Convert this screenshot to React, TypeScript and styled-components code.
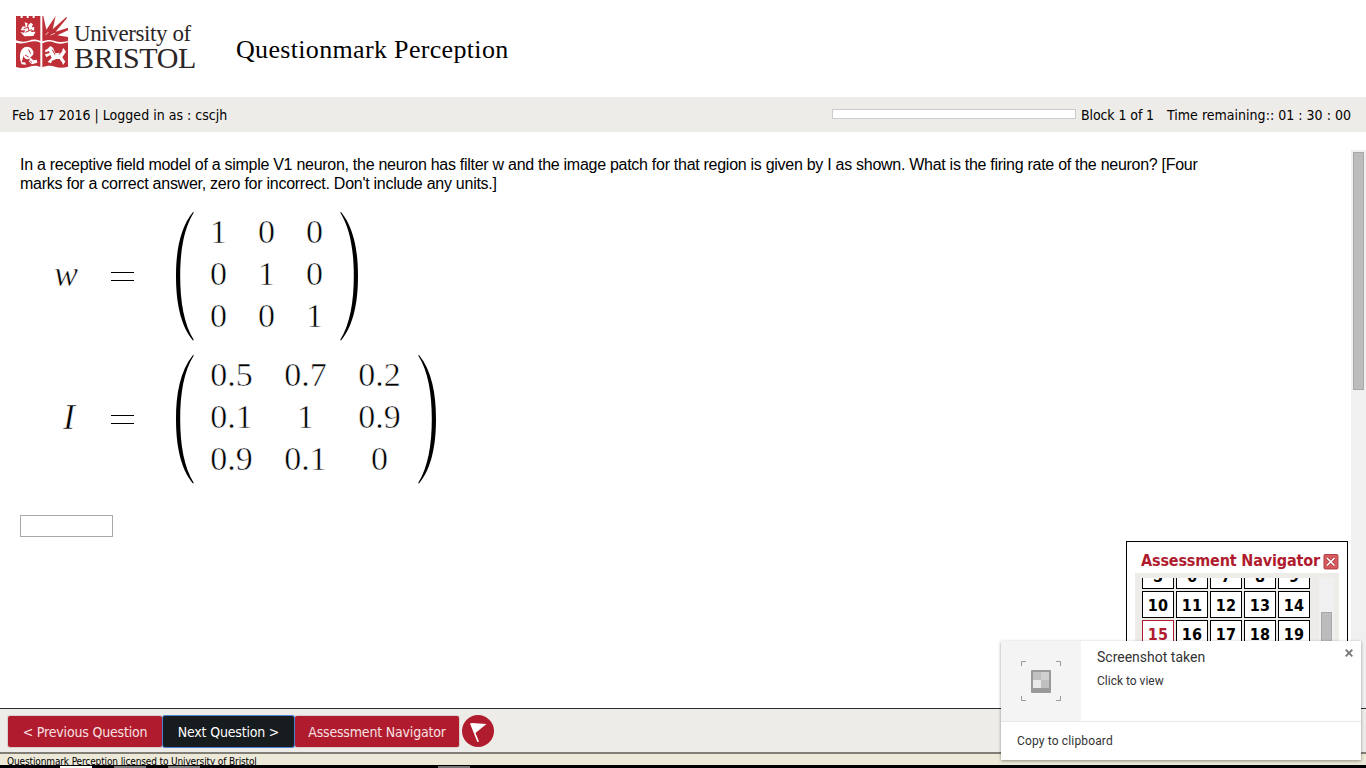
import React from "react";
import styled, { createGlobalStyle } from "styled-components";

const tahoma = `"DejaVu Sans Condensed", "DejaVu Sans", Tahoma, sans-serif`;

const GlobalStyle = createGlobalStyle`
  * { box-sizing: border-box; }
  body { margin: 0; background: #fff; color: #000; overflow: hidden; }
`;

const Page = styled.div`
  position: relative;
  display: flex;
  flex-direction: column;
  width: 1366px;
  height: 768px;
  overflow: hidden;
  white-space: nowrap;
`;

const Header = styled.header`
  display: flex;
  height: 97px;
  padding: 16px 0 0 16px;
`;

const Brand = styled.div`
  display: flex;
  gap: 6px;
  width: 220px;
`;

const Wordmark = styled.div`
  color: #2b2526;
  font-family: "Liberation Serif", serif;
  padding-top: 6px;
`;

const WordmarkLine = styled.div<{ $size: number; $height: number; $spacing: number }>`
  font-size: ${(p) => p.$size}px;
  line-height: ${(p) => p.$height}px;
  letter-spacing: ${(p) => p.$spacing}px;
`;

const Title = styled.h1`
  margin: 17px 0 0;
  font: 400 26px/34px "Liberation Serif", Georgia, serif;
  letter-spacing: 0.33px;
`;

const StatusBar = styled.div`
  display: flex;
  align-items: center;
  height: 35px;
  padding: 1px 15px 0 12px;
  background: #eeece8;
  font: 14px/20px ${tahoma};
`;

const Login = styled.span`
  flex: 1;
  letter-spacing: 0.02px;
`;

const Progress = styled.div`
  width: 244px;
  height: 10px;
  margin: 0 5px 3px 0;
  border: 1px solid #ccc;
  background: #fff;
`;

const Block = styled.span`
  width: 86px;
  letter-spacing: -0.1px;
`;

const Timer = styled.span`
  width: 184px;
  letter-spacing: 0.02px;
`;

const Main = styled.main`
  display: flex;
  height: 576px;
`;

const Question = styled.section`
  flex: 1;
  padding: 23px 0 0 20px;
`;

const Prompt = styled.p`
  margin: 0;
  font: 16px/19px "Liberation Sans", Arial, sans-serif;
  height: 38px;
`;

const PromptLine = styled.span<{ $spacing: number }>`
  display: block;
  letter-spacing: ${(p) => p.$spacing}px;
`;

const Equation = styled.div`
  display: flex;
  height: 130px;
  margin: 18px 0 0 33px;
  font: 34px/42px "Liberation Serif", serif;
  -webkit-text-stroke: 0.55px #fff;

  & + & { margin-top: 13px; }
`;

const Variable = styled.div<{ $inset: number }>`
  width: 57px;
  padding: 42px 0 0 ${(p) => p.$inset}px;
  font-size: 36px;
  font-style: italic;
`;

const EqualsSign = styled.div`
  display: flex;
  flex-direction: column;
  gap: 7px;
  width: 66px;
  padding: 61px 0 0 1px;

  &::before, &::after {
    content: "";
    width: 23px;
    height: 1px;
    background: #000;
  }
`;

const Matrix = styled.div<{ $cell: number; $gap: number }>`
  display: grid;
  grid-template-columns: repeat(3, ${(p) => p.$cell}px);
  grid-auto-rows: 42px;
  column-gap: ${(p) => p.$gap}px;
  padding: 0 16px 0 15px;
  text-align: center;
`;

const Answer = styled.input`
  display: block;
  width: 93px;
  height: 22px;
  margin-top: 31px;
  border: 1px solid #a9a9a9;
  background: #fff;
`;

const Scrollbar = styled.div`
  width: 15px;
  height: 558px;
  margin-top: 18px;
  padding: 2px;
  background: #f0f0f0;
`;

const Thumb = styled.div<{ $height: number }>`
  height: ${(p) => p.$height}px;
  width: 11px;
  border: 1px solid #a8a8a8;
  background: #bcbcbc;
`;

const Toolbar = styled.nav`
  display: flex;
  height: 44px;
  padding: 7px 0 0 8px;
  border-top: 1px solid #2a2d30;
  background: #eeece8;
`;

const ToolButton = styled.button<{ $width: number; $active?: boolean }>`
  width: ${(p) => p.$width}px;
  height: 31px;
  margin-right: 1px;
  padding: 0;
  border: 0;
  border-radius: 2px;
  background: ${(p) => (p.$active ? "#171c1f" : "#b01c2e")};
  box-shadow: 0 0 0 1px ${(p) => (p.$active ? "#4c83d6" : "#d9cfcb")};
  z-index: ${(p) => (p.$active ? 1 : 0)};
  color: ${(p) => (p.$active ? "#fff" : "#f8e0e2")};
  font: 14px/32px ${tahoma};
  letter-spacing: -0.18px;
  white-space: nowrap;
`;

const FlagIcon = styled.svg`
  margin: -1px 0 0 2px;
`;

const License = styled.footer`
  height: 13px;
  padding-left: 7px;
  overflow: hidden;
  border-top: 2px solid #817e75;
  background: #ece9d8;
  font: 10px/15px ${tahoma};
  letter-spacing: -0.125px;
`;

const Shelf = styled.div`
  display: flex;
  height: 3px;
  padding-left: 60px;
  gap: 22px;
  background: #000;
`;

const ShelfMark = styled.i<{ $color: string; $offset?: number }>`
  width: 32px;
  height: 2px;
  margin: 1px 0 0 ${(p) => p.$offset || 0}px;
  background: ${(p) => p.$color};
`;

const Navigator = styled.aside`
  position: absolute;
  left: 1126px;
  top: 541px;
  width: 222px;
  height: 150px;
  padding: 7px 8px;
  border: 1px solid #000;
  background: #fff;
`;

const NavigatorHead = styled.div`
  display: flex;
  align-items: center;
  gap: 3px;
  height: 24px;
  padding-left: 6px;
  color: #b01c2e;
  font: 700 16px/22px ${tahoma};
`;

const NavigatorTitle = styled.span`
  width: 180px;
  letter-spacing: -0.16px;
`;

const CloseIcon = styled.svg`
  margin-top: 1px;
`;

const NavigatorBody = styled.div`
  display: flex;
  height: 110px;
  padding: 5px 5px 0 7px;
  overflow: hidden;
  background: #eeece8;
`;

const NumberWindow = styled.div`
  width: 177px;
  overflow: hidden;
`;

const NumberGrid = styled.div`
  display: grid;
  grid-template-columns: repeat(5, 32px);
  grid-auto-rows: 27px;
  gap: 2px;
  margin-top: -16px;
`;

const NumberCell = styled.div<{ $current: boolean }>`
  border: 1px solid ${(p) => (p.$current ? "#b01c2e" : "#000")};
  background: #fff;
  color: ${(p) => (p.$current ? "#b01c2e" : "#000")};
  font: 700 16px/27px ${tahoma};
  letter-spacing: 0.2px;
  text-align: center;
`;

const NumberScroll = styled.div`
  width: 15px;
  padding: 34px 2px 0;
  background: #f0f0f0;
`;

const Toast = styled.div`
  position: absolute;
  left: 1001px;
  top: 641px;
  width: 360px;
  height: 119px;
  background: #fff;
  box-shadow: 0 1px 3px rgba(0, 0, 0, 0.4);
  color: #333;
  font-family: Roboto, sans-serif;
`;

const ToastTop = styled.div`
  display: flex;
  height: 80px;
`;

const ToastImage = styled.div`
  width: 80px;
  padding: 20px;
  background: #f4f4f4;
`;

const ToastText = styled.div`
  flex: 1;
  padding: 6px 0 0 16px;
`;

const ToastTitle = styled.div`
  font-size: 14px;
  line-height: 20px;
`;

const ToastHint = styled.div`
  padding-top: 5px;
  font-size: 12px;
  line-height: 18px;
`;

const ToastClose = styled.svg`
  margin: 8px 8px 0 0;
`;

const ToastAction = styled.div`
  height: 39px;
  padding-left: 16px;
  border-top: 1px solid #e8e8e8;
  font-size: 12px;
  line-height: 38px;
  letter-spacing: 0.15px;
`;

const Crest = () => (
  <svg width="52" height="52" viewBox="0 0 156 156">
    <g fill="#bf2f38">
      <path d="M0 0H14V6H20V0H32V6H38V0H50V6H56V0H73V75C61 69 51 69 38 74C24 79 12 77 0 73Z" />
      <path d="M79 0L82 0L91 41L119 0L110 40L151 3L153 6L119 47L156 35V43L124 58L156 63V75C139 79 127 79 114 74C101 70 91 72 79 76Z" />
      <path d="M0 80C13 84 26 82 39 78C51 75 61 75 73 80V153C61 147 50 149 38 153C25 157 12 157 0 153Z" />
      <path d="M79 82C93 76 103 75 116 80C129 84 142 84 156 79V152C142 156 130 157 117 152C103 148 93 149 79 154Z" />
    </g>
    <g fill="#fff">
      <path d="M26 18L36 23L34 30L44 20L51 25L47 34L55 33L54 44L47 42L45 48L59 47L52 60L25 61L13 48L24 50L28 43L14 43L20 31L29 32Z" />
      <path d="M18 100C29 87 45 92 51 104C55 114 50 120 42 124L52 133L62 131L64 140L48 145L39 137L42 128C32 133 22 127 23 118L17 139L27 139L31 146L17 145C10 128 10 112 18 100Z" />
      <path d="M95 98L103 90L111 95L118 112L134 110L142 96L150 107L145 115L139 124L148 137L141 147L139 140L131 129L121 129L108 134L105 142L95 138L107 125L103 117L91 124L87 115L101 111L99 105L88 109L87 103Z" />
    </g>
    <path d="M23 38L36 34M28 49L47 41M34 25L39 44M27 117L38 123M38 101L44 113M43 136L48 139M109 101L117 116M129 116L139 104" fill="none" stroke="#bf2f38" strokeWidth="3" />
    <path d="M97 48L89 57M117 52L104 57" stroke="#fff" strokeWidth="2" />
  </svg>
);

const Paren = ({ flip = false }: { flip?: boolean }) => (
  <svg width="19" height="130" viewBox="0 0 19 130">
    <path
      transform={flip ? "translate(19 0) scale(-1 1)" : undefined}
      d="M17 1C4 17 0 40 0 65S4 114 17 129.5L17.8 129C8 113 4.2 91 4.2 65S8 17 17.8 1.5Z"
    />
  </svg>
);

const weights = ["1", "0", "0", "0", "1", "0", "0", "0", "1"];
const patch = ["0.5", "0.7", "0.2", "0.1", "1", "0.9", "0.9", "0.1", "0"];
const questions = Array.from({ length: 15 }, (_, i) => i + 5);

export default function App() {
  return (
    <Page>
      <GlobalStyle />
      <Header>
        <Brand>
          <Crest />
          <Wordmark>
            <WordmarkLine $size={23} $height={24} $spacing={-0.4}>University of</WordmarkLine>
            <WordmarkLine $size={30} $height={24} $spacing={-0.35}>BRISTOL</WordmarkLine>
          </Wordmark>
        </Brand>
        <Title>Questionmark Perception</Title>
      </Header>
      <StatusBar>
        <Login>Feb 17 2016 | Logged in as : cscjh</Login>
        <Progress />
        <Block>Block 1 of 1</Block>
        <Timer>Time remaining:: 01 : 30 : 00</Timer>
      </StatusBar>
      <Main>
        <Question>
          <Prompt>
            <PromptLine $spacing={-0.28}>
              In a receptive field model of a simple V1 neuron, the neuron has filter w and the image patch for that region is given by I as shown. What is the firing rate of the neuron? [Four
            </PromptLine>
            <PromptLine $spacing={-0.26}>marks for a correct answer, zero for incorrect. Don't include any units.]</PromptLine>
          </Prompt>
          <Equation>
            <Variable $inset={1}>w</Variable>
            <EqualsSign />
            <Paren />
            <Matrix $cell={17} $gap={31}>
              {weights.map((n, i) => <span key={i}>{n}</span>)}
            </Matrix>
            <Paren flip />
          </Equation>
          <Equation>
            <Variable $inset={10}>I</Variable>
            <EqualsSign />
            <Paren />
            <Matrix $cell={43} $gap={31}>
              {patch.map((n, i) => <span key={i}>{n}</span>)}
            </Matrix>
            <Paren flip />
          </Equation>
          <Answer aria-label="Answer" />
        </Question>
        <Scrollbar><Thumb $height={238} /></Scrollbar>
      </Main>
      <Toolbar>
        <ToolButton $width={154}>&lt; Previous Question</ToolButton>
        <ToolButton $width={131} $active>Next Question &gt;</ToolButton>
        <ToolButton $width={164}>Assessment Navigator</ToolButton>
        <FlagIcon width="32" height="32" viewBox="0 0 32 32">
          <circle cx="16" cy="16" r="16" fill="#b01c2e" />
          <path d="M8 8.5L10 8L24.5 9L13.5 18L17 26.5L15.4 27Z" fill="#fff" />
        </FlagIcon>
      </Toolbar>
      <License>Questionmark Perception licensed to University of Bristol</License>
      <Shelf>
        <ShelfMark $color="#fff" />
        <ShelfMark $color="#777" />
        <ShelfMark $color="#777" />
        <ShelfMark $color="#777" $offset={216} />
      </Shelf>
      <Navigator>
        <NavigatorHead>
          <NavigatorTitle>Assessment Navigator</NavigatorTitle>
          <CloseIcon width="16" height="16" viewBox="0 0 16 16">
            <rect x="1" y=".5" width="14" height="14.5" rx="1" fill="#d75a5e" stroke="#ad3e45" />
            <path d="M4 4L11.5 11.5M11.5 4L4 11.5" stroke="#a93e42" strokeWidth="3.2" />
            <path d="M4 4L11.5 11.5M11.5 4L4 11.5" stroke="#fff" strokeWidth="1.7" />
          </CloseIcon>
        </NavigatorHead>
        <NavigatorBody>
          <NumberWindow>
            <NumberGrid>
              {questions.map((n) => <NumberCell key={n} $current={n === 15}>{n}</NumberCell>)}
            </NumberGrid>
          </NumberWindow>
          <NumberScroll><Thumb $height={70} /></NumberScroll>
        </NavigatorBody>
      </Navigator>
      <Toast>
        <ToastTop>
          <ToastImage>
            <svg width="40" height="40" viewBox="0 0 40 40">
              <path d="M.5 5V.5H5M35 .5H39.5V5M.5 35V39.5H5M35 39.5H39.5V35" fill="none" stroke="#999" />
              <rect x="10" y="9" width="20" height="23" rx="1" fill="#999" />
              <path d="M12 11H20V19H12ZM20 19H28V27H20Z" fill="#c0c0c0" />
              <path d="M20 11H28V19H20Z" fill="#d0d0d0" />
              <path d="M12 19H20V27H12Z" fill="#e8e8e8" />
            </svg>
          </ToastImage>
          <ToastText>
            <ToastTitle>Screenshot taken</ToastTitle>
            <ToastHint>Click to view</ToastHint>
          </ToastText>
          <ToastClose width="8" height="8" viewBox="0 0 8 8">
            <path d="M.7 .7L7.3 7.3M7.3 .7L.7 7.3" stroke="#777" strokeWidth="1.9" />
          </ToastClose>
        </ToastTop>
        <ToastAction>Copy to clipboard</ToastAction>
      </Toast>
    </Page>
  );
}
